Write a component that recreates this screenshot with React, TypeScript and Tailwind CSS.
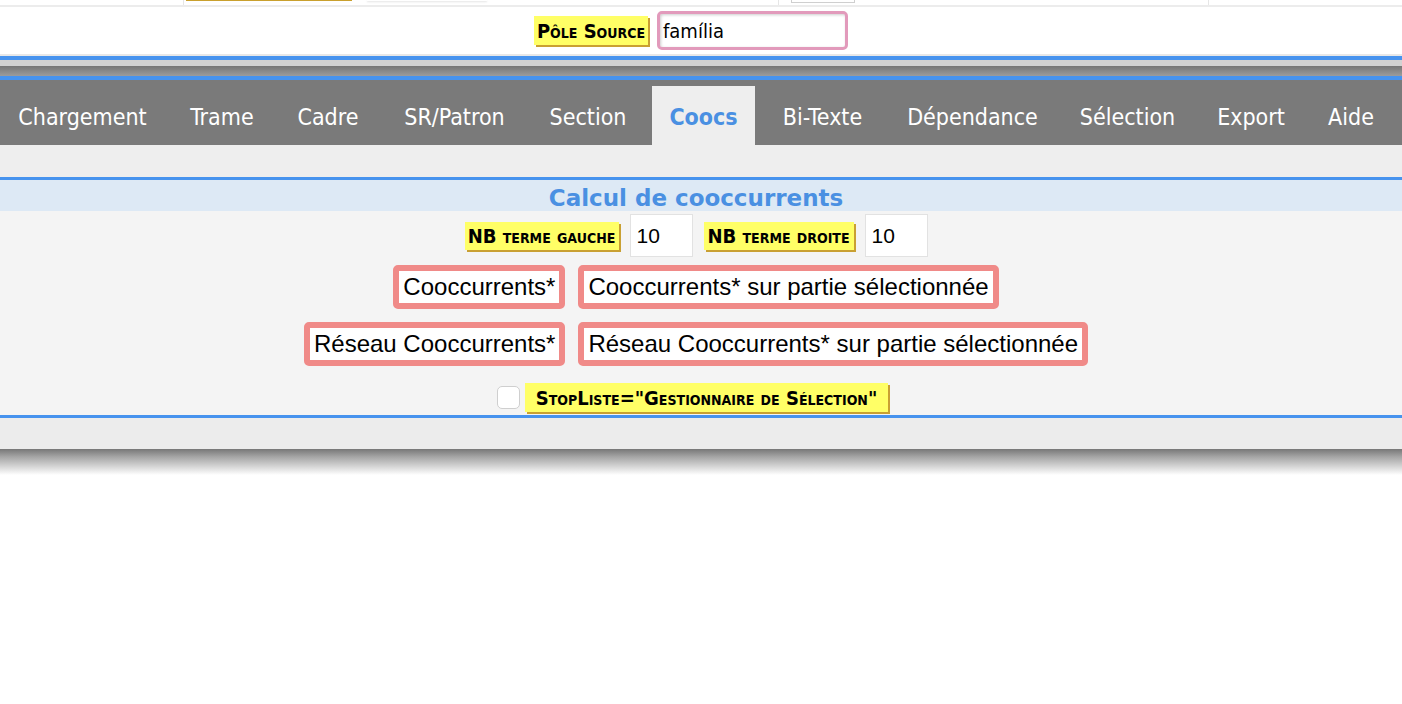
import React from "react";

const tabs: { name: string; w: number; active?: boolean }[] = [
  { name: "Chargement", w: 163 },
  { name: "Trame", w: 98 },
  { name: "Cadre", w: 96 },
  { name: "SR/Patron", w: 139 },
  { name: "Section", w: 110 },
  { name: "Coocs", w: 103, active: true },
  { name: "Bi-Texte", w: 117 },
  { name: "Dépendance", w: 165 },
  { name: "Sélection", w: 127 },
  { name: "Export", w: 102 },
  { name: "Aide", w: 80 },
];

function Label({ children, className = "" }: { children: React.ReactNode; className?: string }) {
  return (
    <span
      className={
        "inline-flex items-center bg-[#ffff66] text-black font-bold shadow-[2px_2px_0_#c9a032] [font-variant:small-caps] font-['DejaVu_Sans_Condensed',sans-serif] leading-none whitespace-nowrap " +
        className
      }
    >
      {children}
    </span>
  );
}

function Btn({ children }: { children: React.ReactNode }) {
  return (
    <button className="h-[44px] bg-white border-[6px] border-[#f08a88] rounded-[5px] px-[4px] text-[24px] text-black font-['Liberation_Sans',sans-serif] leading-none whitespace-nowrap">
      {children}
    </button>
  );
}

export default function App() {
  return (
    <div className="w-full min-h-[704px] bg-white font-['DejaVu_Sans',sans-serif]">
      {/* top strip */}
      <div className="flex h-[7px] border-b-2 border-[#ececec]">
        <div className="w-[183px]" />
        <div className="w-px h-full bg-[#e6e6e6]" />
        <div className="ml-[2px] w-[166px] h-[1px] bg-[#c9a02e]" />
        <div className="ml-[15px] w-[120px] h-[1px] shadow-[0_1px_2px_rgba(0,0,0,0.15)]" />
        <div className="ml-[291px] w-px h-full bg-[#e6e6e6]" />
        <div className="ml-[12px] w-[64px] h-[3px] border-b border-x border-[#cfcfcf]" />
        <div className="ml-[353px] w-px h-full bg-[#e6e6e6]" />
      </div>

      {/* pole source */}
      <div className="flex items-center justify-center h-[47px] pr-[20px] gap-[9px]">
        <Label className="h-[29px] w-[114px] justify-center text-[20px]">Pôle Source</Label>
        <div className="w-[191px] h-[39px] border-[3px] border-[#e29abb] rounded-[5px] bg-white shadow-[inset_1px_1px_3px_rgba(0,0,0,0.2)] flex items-center px-[3px] text-[20px] text-black font-['DejaVu_Sans_Condensed',sans-serif]">
          família
        </div>
      </div>
      <div className="h-[2px] bg-[#e8e8e8]" />
      <div className="h-[4px] bg-[#4793ee]" />
      <div className="h-[6px] bg-[#d2d2d2]" />
      <div className="h-[10px] bg-[linear-gradient(#767676,#9c9c9c)]" />
      <div className="h-[4px] bg-[#4793ee]" />

      {/* tabs */}
      <div className="flex items-end h-[65px] bg-[#7a7a7a] pl-[1px] gap-[9px] font-['DejaVu_Sans_Condensed',sans-serif]">
        {tabs.map((t) =>
          t.active ? (
            <div
              key={t.name}
              style={{ width: t.w }}
              className="h-[59px] bg-[#eeeeee] flex items-center justify-center pt-[4px] text-[23px] font-bold text-[#4a90e2]"
            >
              {t.name}
            </div>
          ) : (
            <div
              key={t.name}
              style={{ width: t.w }}
              className="h-[65px] flex items-center justify-center pt-[10px] text-[23px] text-white"
            >
              {t.name}
            </div>
          )
        )}
      </div>

      <div className="h-[32px] bg-[#eeeeee]" />
      <div className="h-[3px] bg-[#4793ee]" />
      <div className="h-[31px] bg-[#dde9f5] flex items-center justify-center pr-[10px] pt-[5px]">
        <span className="text-[23px] font-bold text-[#4a90e2] leading-none">Calcul de cooccurrents</span>
      </div>

      {/* content */}
      <div className="bg-[#f4f4f4] h-[204px] pt-[3px] pr-[10px] flex flex-col items-center">
        <div className="flex items-center gap-[11px] h-[43px]">
          <Label className="h-[28px] w-[154px] justify-center text-[20px]">NB terme gauche</Label>
          <div className="w-[63px] h-[43px] bg-white border border-[#e2e2e2] flex items-center px-[6px] text-[21px] text-black font-['Liberation_Sans',sans-serif]">10</div>
          <Label className="h-[28px] w-[150px] justify-center text-[20px]">NB terme droite</Label>
          <div className="w-[63px] h-[43px] bg-white border border-[#e2e2e2] flex items-center px-[6px] text-[21px] text-black font-['Liberation_Sans',sans-serif]">10</div>
        </div>
        <div className="grid grid-cols-[auto_auto] gap-x-[13px] gap-y-[13px] mt-[8px]">
          <div className="flex justify-end">
            <Btn>Cooccurrents*</Btn>
          </div>
          <div className="flex justify-start">
            <Btn>Cooccurrents* sur partie sélectionnée</Btn>
          </div>
          <div className="flex justify-end">
            <Btn>Réseau Cooccurrents*</Btn>
          </div>
          <div className="flex justify-start">
            <Btn>Réseau Cooccurrents* sur partie sélectionnée</Btn>
          </div>
        </div>
        <div className="flex items-center gap-[5px] mt-[17px] mr-[7px]">
          <div className="w-[23px] h-[23px] bg-white border border-[#cfcfcf] rounded-[5px]" />
          <Label className="h-[29px] w-[363px] justify-center text-[20px]">StopListe="Gestionnaire de Sélection"</Label>
        </div>
      </div>
      <div className="h-[3px] bg-[#4793ee]" />
      <div className="h-[31px] bg-[#ececec]" />
      <div className="h-[26px] bg-[linear-gradient(#777777,#a5a5a5_30%,#ffffff)]" />
    </div>
  );
}
